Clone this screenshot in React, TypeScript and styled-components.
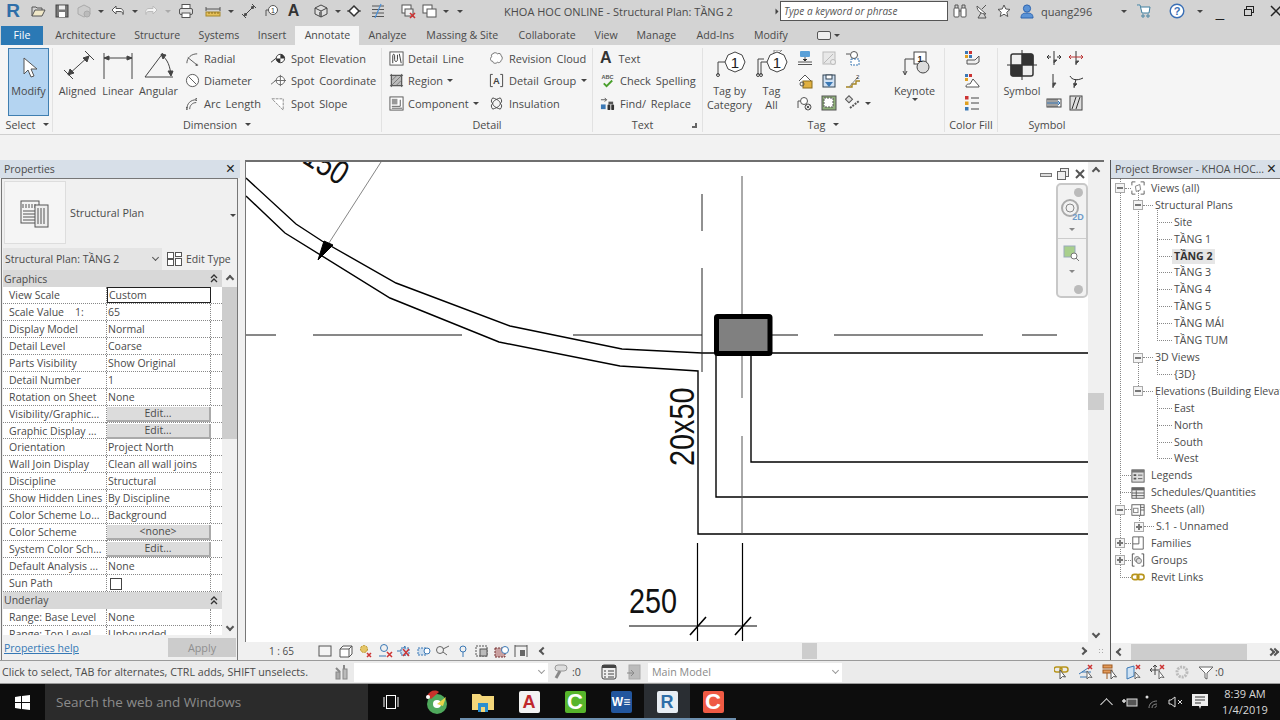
import React from 'react';
import styled, { createGlobalStyle } from 'styled-components';

const GlobalStyle = createGlobalStyle`
  html, body { margin: 0; padding: 0; background: #f0f0f0; }
  * { box-sizing: border-box; }
`;

const Screen = styled.div`
  width: 1280px;
  height: 720px;
  overflow: hidden;
  display: flex;
  flex-direction: column;
  font-family: 'Open Sans', 'Noto Sans', sans-serif;
  font-size: 10.8px;
  color: #4a4a4a;
  background: #f0f0f0;
`;

const IconSvg = styled.svg`
  display: block;
  flex: none;
`;

const Caret = styled.span<{ $c?: string; $mt?: number }>`
  display: inline-block;
  flex: none;
  width: 0;
  height: 0;
  margin-top: ${(p) => p.$mt || 0}px;
  border-left: 3px solid transparent;
  border-right: 3px solid transparent;
  border-top: 3px solid ${(p) => p.$c || '#444'};
`;

const SideCaret = styled(Caret)`
  transform: rotate(-90deg);
`;

const icons: Record<string, React.ReactNode> = {
  open: <><path d="M2 13V4h4l1 1h5v2" stroke="#555" /><path d="M2 13l3-6h10l-3 6z" fill="#f0e8c8" stroke="#555" /></>,
  save: <><rect x="2" y="2" width="12" height="12" fill="#777" stroke="#444" /><rect x="5" y="2.5" width="6" height="4" fill="#eee" stroke="none" /><rect x="5" y="9" width="6" height="5" fill="#fff" stroke="none" /></>,
  model: <><path d="M8 2l6 3v6l-6 3-6-3V5z" fill="#ccc" stroke="#aaa" /><circle cx="11" cy="11" r="3" fill="#bbb" stroke="#aaa" /></>,
  undo: <path d="M6 3L2 7l4 4V8.500h4c2 0 3 1 3 3 1-3 0-6-3-6H6z" fill="#fff" stroke="#555" />,
  redo: <path d="M10 3l4 4-4 4V8.500H6c-2 0-3 1-3 3-1-3 0-6 3-6h4z" fill="#f4f4f4" stroke="#bbb" />,
  print: <><rect x="4" y="1.5" width="8" height="4" fill="#fff" stroke="#555" /><rect x="1.5" y="5.5" width="13" height="6" rx="1.5" fill="#ddd" stroke="#555" /><rect x="4" y="10" width="8" height="4.5" fill="#fff" stroke="#555" /></>,
  measure: <><path d="M1 6h14M1 4v4M15 4v4" stroke="#555" /><rect x="1" y="9" width="14" height="4" fill="#e6c15a" stroke="#a5872d" /><path d="M4 9v2M7 9v2M10 9v2M13 9v2" stroke="#8a6d1d" /></>,
  dim: <><path d="M3 13L13 3" stroke="#444" /><path d="M1 11l4 4M11 1l4 4" stroke="#444" /><path d="M3 13l1-3 2 2zM13 3l-3 1 2 2z" fill="#444" /></>,
  tagMini: <><circle cx="10" cy="7" r="4.5" fill="#fff" stroke="#555" /><path d="M5.500 7H3v6" stroke="#555" /><text x="10" y="9.500" fontSize="7" fill="#333" stroke="none" textAnchor="middle" fontFamily="Liberation Sans">1</text></>,
  cube: <><path d="M8 2l6 3v6l-6 3-6-3V5z" fill="#ddd" stroke="#444" /><path d="M2 5l6 3 6-3M8 8v6" stroke="#444" /><rect x="6" y="9" width="3" height="4" fill="#777" stroke="none" /></>,
  section: <><path d="M8 3l5 5-5 5-5-5z" fill="#fff" stroke="#333" strokeWidth="1.5" /><path d="M1 8h3M12 8h3" stroke="#333" /></>,
  thin: <><path d="M2 3h12M2 6.500h12M2 10h12M2 13.500h12" stroke="#555" /><path d="M11 1L5 15" stroke="#4a90d9" strokeWidth="1.2" /></>,
  hidden: <><rect x="2" y="2" width="9" height="8" fill="#fff" stroke="#555" /><rect x="5" y="6" width="8" height="7" fill="#eee" stroke="#555" /><path d="M10 10l5 5M15 10l-5 5" stroke="#c33" strokeWidth="1.6" /></>,
  switchw: <><rect x="2" y="2" width="9" height="8" fill="#fff" stroke="#555" /><rect x="6" y="6" width="9" height="8" fill="#fff" stroke="#555" /></>,
  binoc: <><rect x="2" y="5" width="5" height="9" rx="1" fill="#fff" stroke="#555" /><rect x="9" y="5" width="5" height="9" rx="1" fill="#fff" stroke="#555" /><path d="M3 5V2h3v3M10 5V2h3v3M7 8h2" stroke="#555" /></>,
  dish: <><path d="M3 3c0 5 4 8 9 8z" fill="#fff" stroke="#555" /><path d="M7 10l-3 5h8l-2-4M8 6l4-4" stroke="#555" /></>,
  star: <path d="M8 2l1.800 4 4.200.4-3.200 2.800 1 4.300L8 11.200l-3.800 2.300 1-4.300L2 6.400 6.200 6z" fill="#fff" stroke="#555" />,
  user: <><circle cx="8" cy="5.500" r="3.600" fill="#5b93d6" stroke="#2c64b0" /><path d="M2 15c0-4 2-5 6-5s6 1 6 5z" fill="#5b93d6" stroke="#2c64b0" /></>,
  cart: <><path d="M1 2h3l2 8h7l1-6H5" stroke="#3f7f9f" fill="#fff" /><circle cx="7" cy="13" r="1.200" stroke="#3f7f9f" /><circle cx="12" cy="13" r="1.200" stroke="#3f7f9f" /></>,
  help: <><circle cx="8" cy="8" r="6.800" fill="#fff" stroke="#3a6fb5" strokeWidth="1.4" /><text x="8" y="12" fontSize="11" fontWeight="700" fill="#3a6fb5" stroke="none" textAnchor="middle" fontFamily="Liberation Sans">?</text></>,
  radial: <><path d="M2 13C2 7 7 3 13 3" stroke="#555" /><path d="M3 7l10 8M11 15h3M12.500 13.500v3" stroke="#555" /></>,
  diameter: <><circle cx="8" cy="8" r="6.500" fill="#fff" stroke="#555" /><path d="M4 4l8 8" stroke="#555" /></>,
  arc: <><path d="M2 14C2 8 6 4 12 4" stroke="#555" /><path d="M5 14c0-4 3-7 7-7" stroke="#555" /><path d="M2 12v3M12 2v3" stroke="#333" strokeWidth="1.5" strokeDasharray="1 1" /></>,
  spotEl: <><path d="M0 12l5-4h3" stroke="#333" /><circle cx="10" cy="8" r="4.500" fill="#fff" stroke="#333" /><path d="M10 8V3.500a4.500 4.500 0 0 1 4.500 4.500zM10 8v4.500A4.500 4.500 0 0 1 5.500 8z" fill="#333" stroke="none" /></>,
  spotCo: <><path d="M0 12l5-4h3" stroke="#666" /><circle cx="10" cy="8" r="4.500" fill="#fff" stroke="#666" /><path d="M10 2v12M4 8h12" stroke="#666" /></>,
  spotSl: <path d="M1 3h12v12z" fill="#fff" stroke="#888" strokeDasharray="3 1" />,
  detail: <><rect x="1" y="1" width="14" height="14" fill="#fff" stroke="#555" /><path d="M4 13V5c0-2 2-2 2 0v4c0 3 3 3 3 0V4M11 3l2 10" stroke="#333" /></>,
  region: <><rect x="2.500" y="2.500" width="11" height="11" fill="#bbb" stroke="#555" /><path d="M1 2.500h14M1 13.500h14M2.500 1v14M13.500 1v14" stroke="#555" /><path d="M3 8l5-5M3 13l10-10M8 13l5-5" stroke="#777" /></>,
  component: <><rect x="1" y="1" width="14" height="14" fill="#fff" stroke="#555" /><rect x="3" y="3" width="6" height="6" fill="#999" stroke="none" /><path d="M3 11h9V4M3 13h11" stroke="#555" /></>,
  cloud: <path d="M4 3c2-2 4-1 5 0 2-1 4 0 4 2 2 2 1 4 0 5 0 2-3 3-4 2-2 2-5 1-5-1-3 0-3-4-1-5-1-1 0-3 1-3z" fill="#fff" stroke="#666" />,
  group: <><path d="M4 1.500H1.500v13H4M12 1.500h2.500v13H12" stroke="#444" /><text x="8" y="12" fontSize="10" fontWeight="700" fill="#444" stroke="none" textAnchor="middle" fontFamily="Liberation Sans">A</text></>,
  insul: <path d="M4 2c6 2 8 4 8 6s-2 4-8 6M12 2C6 4 4 6 4 8s2 4 8 6M4 2c-2 2-2 5 0 6-2 1-2 4 0 6M12 2c2 2 2 5 0 6 2 1 2 4 0 6" stroke="#444" />,
  check: <><text x="8" y="6" fontSize="6" fontWeight="700" fill="#555" stroke="none" textAnchor="middle" fontFamily="Liberation Sans">ABC</text><path d="M4 11l3 3 6-6" stroke="#4aa02c" strokeWidth="2" /></>,
  find: <><path d="M1 4h6M5 2l2 2-2 2" stroke="#555" /><rect x="1" y="9" width="5" height="5" fill="#3a78b5" stroke="none" /><rect x="8" y="9" width="3" height="6" rx="1" fill="#333" stroke="none" /><rect x="12" y="9" width="3" height="6" rx="1" fill="#333" stroke="none" /><rect x="9" y="6" width="5" height="3" fill="#555" stroke="none" /></>,
  tagOn: <><rect x="3" y="1" width="10" height="6" rx="1" fill="#5aa0d8" stroke="none" /><path d="M8 7v4M1 12h14M1 14.500h14" stroke="#555" /><path d="M6 9l2 2 2-2" fill="#333" stroke="#333" /></>,
  tagOff: <><rect x="2" y="2" width="12" height="12" fill="#e8e8e8" stroke="#bbb" /><path d="M3 13l9-9" stroke="#bbb" /><circle cx="12" cy="12" r="2.500" fill="#eee" stroke="#bbb" /></>,
  tagBox: <><circle cx="9" cy="5" r="3.500" fill="#fff" stroke="#555" /><rect x="6" y="9" width="8" height="6" fill="#fff" stroke="#3a78b5" strokeDasharray="2 1" /><path d="M1 4h4" stroke="#555" /></>,
  tagFold: <><path d="M2 8l6-6 6 6" fill="#fff" stroke="#555" /><rect x="6" y="8" width="9" height="7" fill="#e0b040" stroke="#8a6d1d" /><circle cx="5" cy="11" r="2" stroke="#555" /></>,
  tagSave: <><rect x="2" y="2" width="12" height="12" fill="#cfe0f2" stroke="#345" /><rect x="5" y="2" width="6" height="4" fill="#fff" stroke="#345" /><path d="M4 9h8l-4 5z" fill="#3a78b5" stroke="none" /></>,
  tagStep: <><path d="M1 14h6v-3h4V8h4" stroke="#a58420" strokeWidth="1.4" /><path d="M4 14l9-10" stroke="#888" /><text x="11" y="6" fontSize="6" fill="#333" stroke="none" fontFamily="Liberation Sans">2</text></>,
  tagX: <><circle cx="7" cy="6" r="3.500" fill="#fff" stroke="#555" /><path d="M3 6H1v7" stroke="#555" /><circle cx="11" cy="12" r="3" fill="#eee" stroke="#555" /><path d="M9.500 10.500l3 3M12.500 10.500l-3 3" stroke="#555" /></>,
  tagGrid: <><rect x="1" y="1" width="14" height="14" fill="#8fb07a" stroke="#555" /><rect x="3" y="3" width="9" height="9" fill="#fff" stroke="#555" strokeDasharray="2 1" /></>,
  tagDiag: <><rect x="1" y="2" width="5" height="5" transform="rotate(45 4 5)" fill="#ddd" stroke="#555" /><path d="M5 13l9-7" stroke="#555" strokeWidth="2" strokeDasharray="2 1" /></>,
  fillA: <><rect x="1" y="1" width="3" height="3" fill="#3a78b5" stroke="none" /><rect x="5" y="1" width="3" height="3" fill="#c33" stroke="none" /><rect x="1" y="5" width="3" height="3" fill="#e0a020" stroke="none" /><rect x="5" y="5" width="3" height="3" fill="#3a78b5" stroke="none" /><path d="M3 10h8l4-4v6l-3 2H3z" fill="#eee" stroke="#555" /></>,
  fillB: <><rect x="1" y="1" width="3" height="3" fill="#3a78b5" stroke="none" /><rect x="5" y="1" width="3" height="3" fill="#c33" stroke="none" /><rect x="1" y="5" width="3" height="3" fill="#e0a020" stroke="none" /><path d="M2 14c0-3 2-3 4-3l3-5 6 7v1z" fill="#fff" stroke="#555" /></>,
  fillC: <><rect x="1" y="1" width="3.500" height="3.500" fill="#c33" stroke="none" /><rect x="1" y="6.500" width="3.500" height="3.500" fill="#e0a020" stroke="none" /><rect x="1" y="12" width="3.500" height="3.500" fill="#3a78b5" stroke="none" /><path d="M7 3h8M7 8h8M7 14h8" stroke="#444" /></>,
  symA: <><path d="M8 1v14" stroke="#333" /><path d="M8 10l3 0-3 3z" fill="#333" /><path d="M1 7h4M11 7h4M3 5L1 7l2 2M13 5l2 2-2 2" stroke="#333" /></>,
  symB: <><path d="M8 1v14" stroke="#333" /><path d="M8 11l3 0-3 3z" fill="#333" /><path d="M1 7h14M3 5L1 7l2 2M13 5l2 2-2 2" stroke="#b33" /></>,
  symC: <><path d="M7 1v14" stroke="#333" /><path d="M7 10l3 0-3 4z" fill="#333" /></>,
  symD: <><path d="M2 3c2 4 7 5 13 2M8 6l-2 9M5 11h4" stroke="#333" /><path d="M6 10l3 1-3 3z" fill="#333" /></>,
  symE: <><rect x="1" y="4" width="14" height="8" fill="#fff" stroke="#444" /><path d="M3 4v8M5 4v8M7 4v8M9 4v8M11 4v8" stroke="#444" /><path d="M1 8h13l-2-2M14 8l-2 2" stroke="#3a78b5" /></>,
  symF: <><rect x="2" y="1" width="12" height="14" fill="#ddd" stroke="#444" /><path d="M4 14L8 2M8 14l4-12" stroke="#333" /></>,
  views: <><path d="M1 5V1h4M11 1h4v4M15 11v4h-4M5 15H1v-4" stroke="#555" /><path d="M5 6l5-2 1 6-5 2z" fill="#fff" stroke="#777" /></>,
  legends: <><rect x="1" y="1" width="14" height="14" fill="#ddd" stroke="#555" /><rect x="1" y="1" width="14" height="3" fill="#777" stroke="none" /><rect x="3" y="6" width="3" height="2" fill="#555" stroke="none" /><rect x="3" y="10" width="3" height="2" fill="#555" stroke="none" /><path d="M8 7h5M8 11h5" stroke="#555" /></>,
  sched: <><rect x="1" y="2" width="14" height="12" fill="#eee" stroke="#555" /><rect x="1" y="2" width="14" height="3" fill="#666" stroke="none" /><path d="M1 8h14M1 11h14M6 5v9" stroke="#555" /></>,
  sheets: <><rect x="1" y="2" width="14" height="12" fill="#fff" stroke="#555" /><rect x="3" y="6" width="5" height="5" stroke="#777" /><path d="M11 2v12M11 5h4M11 8h4" stroke="#555" /></>,
  families: <><path d="M2 1h12v14H2z" fill="#fff" stroke="#555" /><path d="M9 1v8H2" stroke="#555" /></>,
  groups: <><path d="M4 1H1.500v14H4M12 1h2.500v14H12" stroke="#444" /><circle cx="7" cy="7" r="3" stroke="#777" fill="#ddd" /><circle cx="9" cy="9" r="3" stroke="#777" fill="#ddd" /></>,
  links: <><rect x="1" y="5" width="8" height="6" rx="3" stroke="#b8951c" strokeWidth="1.8" /><rect x="7" y="5" width="8" height="6" rx="3" stroke="#b8951c" strokeWidth="1.8" /></>,
  sun: <><circle cx="7" cy="6" r="3.500" fill="#e5c668" stroke="#b5922a" strokeDasharray="2 1" /><path d="M10 10l4 4M14 10l-4 4" stroke="#c33" strokeWidth="1.5" /></>,
  crop: <><rect x="1" y="3" width="12" height="10" fill="#f4f4f4" stroke="#555" /></>,
  box: <><path d="M2 6l3-3h9v8l-3 3H2zM2 6h9v8M11 6l3-3" fill="#fff" stroke="#555" /></>,
  hideEl: <><circle cx="7" cy="5" r="3.500" stroke="#3a78b5" /><path d="M2 13h7" stroke="#3a78b5" /><path d="M10 9l5 5M15 9l-5 5" stroke="#c33" strokeWidth="1.5" /></>,
  lamp: <><path d="M1 8h4l4-5v10" stroke="#3a78b5" /><rect x="5" y="5" width="8" height="7" fill="#cde" stroke="#3a78b5" strokeDasharray="2 1" /><path d="M7 6l6 7M13 6l-6 7" stroke="#c33" strokeWidth="1.4" /></>,
  lamp2: <><rect x="2" y="5" width="8" height="7" fill="#cde" stroke="#3a78b5" strokeDasharray="2 1" /><circle cx="11" cy="8" r="3" stroke="#3a78b5" fill="#fff" /></>,
  glasses: <><circle cx="5" cy="7" r="3.500" stroke="#666" /><path d="M8 6l6-3M8 9l4 3" stroke="#666" /></>,
  pin: <><circle cx="8" cy="6" r="3" stroke="#3a78b5" /><path d="M8 9v5" stroke="#3a78b5" /></>,
  temp: <><rect x="2" y="3" width="11" height="10" stroke="#555" strokeDasharray="2 1" /><rect x="6" y="6" width="7" height="7" fill="#bbb" stroke="#555" /></>,
  reveal: <><rect x="1" y="5" width="10" height="9" fill="#c9a0a0" stroke="#733" strokeDasharray="2 1" /><circle cx="11" cy="7" r="3.500" fill="#fff" stroke="#3a78b5" /></>,
  crop2: <><path d="M2 2v12M14 2v12M2 3h12" stroke="#555" /><rect x="7" y="7" width="5" height="6" fill="#666" stroke="none" /></>,
  wrench: <><rect x="2" y="8" width="4" height="7" fill="#aaa" stroke="#888" /><rect x="9" y="5" width="4" height="10" fill="#bbb" stroke="#888" /><path d="M2 4l4 4M10 1v4" stroke="#888" strokeWidth="2" /></>,
  pipe: <><rect x="3" y="1" width="12" height="6" rx="3" fill="#ddd" stroke="#999" /><path d="M8 7l-4 7" stroke="#888" strokeWidth="3" /></>,
  calc: <><rect x="1" y="1" width="14" height="14" rx="2" fill="#eee" stroke="#444" /><rect x="1" y="1" width="14" height="3" fill="#444" stroke="none" /><path d="M3 7h2M7 7h6M3 10h2M7 10h6M3 13h2M7 13h6" stroke="#444" /></>,
  exit: <><rect x="3" y="1" width="11" height="14" fill="#bbb" stroke="#aaa" /><path d="M1 9h7M5 6l3 3-3 3" stroke="#888" /></>,
  selLink: <><rect x="0" y="3" width="8" height="5" rx="2.500" stroke="#b8951c" strokeWidth="1.5" /><rect x="6" y="3" width="8" height="5" rx="2.500" stroke="#b8951c" strokeWidth="1.5" /><path d="M6 6v9l2.500-2.500 3 .5z" fill="#fff" stroke="#555" /></>,
  selUnd: <><path d="M1 10l9-6M2 13h9M4 8h9" stroke="#3a78b5" /><path d="M10 1l4 4M14 1l-4 4" stroke="#c33" strokeWidth="1.5" /><path d="M9 7v8l2-2 3 .5z" fill="#fff" stroke="#666" /></>,
  selPin: <><rect x="1" y="1" width="9" height="3" fill="#e29a5a" stroke="#a05a20" /><rect x="1" y="6" width="9" height="3" fill="#e29a5a" stroke="#a05a20" /><path d="M5 9v6" stroke="#a05a20" /><path d="M9 6v9l2.500-2.500 3 .5z" fill="#fff" stroke="#555" /></>,
  selFace: <><path d="M1 4l7-2v10l-7 3z" fill="#cfe3f5" stroke="#3a78b5" /><path d="M10 1l4 4M14 1l-4 4" stroke="#c33" strokeWidth="1.5" /><path d="M9 8v7l2-2 3 .5z" fill="#fff" stroke="#666" /></>,
  selDrag: <><path d="M5 1v10M0 6h10M5 1L3 3M5 1l2 2M0 6l2-2M0 6l2 2" stroke="#444" /><path d="M10 1l4 4M14 1l-4 4" stroke="#c33" strokeWidth="1.5" /><path d="M9 7v8l2-2 3 .5z" fill="#fff" stroke="#666" /></>,
  gear: <circle cx="8" cy="8" r="5" stroke="#bbb" strokeWidth="3" strokeDasharray="2 1" />,
  funnel: <path d="M1 3h14L9 9v6l-2-1V9z" fill="#fff" stroke="#666" />,
};

const Icon = ({ n, s = 16 }: { n: string; s?: number }): JSX.Element => (
  <IconSvg width={s} height={s} viewBox="0 0 16 16" fill="none" stroke="#555" strokeWidth="1">
    {icons[n]}
  </IconSvg>
);

/* title bar */
const TitleBar = styled.div`
  height: 22px;
  flex: none;
  display: flex;
  align-items: center;
  background: #d3d3d3;
  font-size: 11px;
`;

const Slot = styled.div<{ $w: number; $ml?: number }>`
  width: ${(p) => p.$w}px;
  margin-left: ${(p) => p.$ml || 0}px;
  flex: none;
  display: flex;
  align-items: center;
  justify-content: center;
`;

const Logo = styled.span`
  font-family: 'Liberation Sans', sans-serif;
  font-weight: 700;
  font-size: 19px;
  color: #2f6ea8;
`;

const BigA = styled.span`
  font-family: 'Liberation Sans', sans-serif;
  font-weight: 700;
  font-size: 16px;
  color: #333;
`;

const QuickSep = styled.div`
  width: 1px;
  height: 18px;
  margin: 0 3px;
  background: #bdbdbd;
`;

const TitleText = styled.div`
  width: 269px;
  margin-left: 37px;
  flex: none;
  white-space: nowrap;
`;

const SearchBox = styled.div`
  width: 168px;
  height: 20px;
  flex: none;
  padding-left: 3px;
  background: #fff;
  border: 1px solid #555;
  font-style: italic;
  font-size: 10px;
  line-height: 18px;
  color: #555;
  white-space: nowrap;
`;

const UserName = styled.div`
  width: 80px;
  flex: none;
  margin-left: 3px;
`;

const WindowGlyph = styled.span`
  font-family: 'Liberation Sans', sans-serif;
  color: #222;
  font-size: 15px;
`;

/* tabs */
const TabBar = styled.div`
  height: 23px;
  flex: none;
  display: flex;
  align-items: stretch;
  padding: 4px 0 0 1px;
  background: #d3d3d3;
  font-size: 10.6px;
`;

const Tab = styled.div<{ $active?: boolean; $px?: number }>`
  padding: 0 ${(p) => p.$px || 9.2}px 1px;
  display: flex;
  align-items: center;
  white-space: nowrap;
  background: ${(p) => (p.$active ? '#f5f5f5' : 'transparent')};
`;

const FileTab = styled.div`
  width: 42px;
  margin-right: 3px;
  padding-bottom: 1px;
  display: flex;
  align-items: center;
  justify-content: center;
  background: #2b79b5;
  color: #fff;
`;

const PanelToggle = styled.div`
  display: flex;
  align-items: center;
  gap: 3px;
  margin-left: 20px;
`;

const ToggleBox = styled.div`
  width: 14px;
  height: 9px;
  border: 1px solid #555;
  border-radius: 2px;
  background: #eee;
`;

/* ribbon */
const Ribbon = styled.div`
  height: 90px;
  flex: none;
  display: flex;
  padding-left: 3px;
  background: #f5f5f5;
  border-bottom: 1px solid #cfcfcf;
`;

const RibbonGroup = styled.div<{ $w: number; $last?: boolean }>`
  width: ${(p) => p.$w}px;
  flex: none;
  margin-top: 3px;
  margin-bottom: 2px;
  display: flex;
  flex-direction: column;
  border-right: ${(p) => (p.$last ? 'none' : '1px solid #e2e2e2')};
`;

const GroupBody = styled.div<{ $pl?: number }>`
  height: 68px;
  display: flex;
  padding-left: ${(p) => p.$pl || 0}px;
`;

const GroupLabel = styled.div<{ $pr?: number }>`
  flex: 1;
  display: flex;
  align-items: center;
  justify-content: center;
  gap: 8px;
  padding-right: ${(p) => p.$pr || 0}px;
  position: relative;
  white-space: nowrap;
`;

const ModifyButton = styled.div`
  width: 41px;
  height: 68px;
  margin-left: 5px;
  display: flex;
  flex-direction: column;
  align-items: center;
  padding-top: 6px;
  background: #b4d4f1;
  border: 1px solid #3f7eb0;
`;

const ModifyLabel = styled.div`
  margin-top: auto;
  margin-bottom: 17px;
  text-align: center;
  white-space: nowrap;
`;

const BigTool = styled.div<{ $w: number }>`
  width: ${(p) => p.$w}px;
  flex: none;
  display: flex;
  flex-direction: column;
  align-items: center;
  padding-top: 2px;
  white-space: nowrap;
`;

const BigLabel = styled.div<{ $mt?: number }>`
  height: 14px;
  margin-top: ${(p) => (p.$mt === undefined ? 4 : p.$mt)}px;
  line-height: 14px;
  text-align: center;
`;

const SmallColumn = styled.div<{ $w: number; $ml?: number }>`
  width: ${(p) => p.$w}px;
  margin-left: ${(p) => p.$ml || 0}px;
  margin-top: -1px;
  flex: none;
  display: flex;
  flex-direction: column;
`;

const SmallTool = styled.div<{ $gap?: number }>`
  height: 22.5px;
  display: flex;
  align-items: center;
  gap: ${(p) => p.$gap || 4}px;
  white-space: nowrap;
  word-spacing: 2px;
  font-size: 11px;
`;

const IconGrid = styled.div<{ $cols: number; $w: number; $ml?: number }>`
  width: ${(p) => p.$w}px;
  margin-left: ${(p) => p.$ml || 0}px;
  margin-top: -1px;
  height: 68px;
  flex: none;
  display: grid;
  grid-template-columns: repeat(${(p) => p.$cols}, 1fr);
  grid-auto-rows: 22.5px;
  align-items: center;
  justify-items: center;
`;

const SoftSep = styled.div`
  width: 1px;
  height: 62px;
  margin: 2px 3px 0 6px;
  background: #e2e2e2;
`;

const Launcher = styled.span`
  position: absolute;
  right: 5px;
  top: 7px;
  width: 5px;
  height: 5px;
  border-right: 2px solid #666;
  border-bottom: 2px solid #666;
`;

const RibbonGap = styled.div`
  height: 25px;
  flex: none;
  background: #f2f2f2;
`;

/* workspace */
const Workspace = styled.div`
  height: 500px;
  flex: none;
  display: flex;
`;

const PropertiesPanel = styled.div`
  width: 240px;
  flex: none;
  display: flex;
  flex-direction: column;
`;

const PanelHeader = styled.div`
  height: 18px;
  flex: none;
  display: flex;
  align-items: center;
  justify-content: space-between;
  padding: 0 4px;
  background: #d7dfe8;
  font-size: 10.5px;
  white-space: nowrap;
`;

const PropertiesHeader = styled(PanelHeader)`
  padding-right: 5px;
`;

const CloseX = styled.span`
  font-family: 'Liberation Sans', sans-serif;
  font-size: 16px;
  line-height: 16px;
  color: #222;
`;

const PropertiesBody = styled.div`
  flex: 1;
  min-height: 0;
  display: flex;
  flex-direction: column;
  margin-left: 1px;
  margin-right: 2px;
  border: 1px solid #777;
  border-bottom: none;
  background: #f0f0f0;
`;

const TypeSelector = styled.div`
  height: 68px;
  flex: none;
  display: flex;
  align-items: center;
  padding: 2px 0 3px 2px;
`;

const TypeThumb = styled.div`
  width: 62px;
  height: 63px;
  flex: none;
  display: flex;
  align-items: center;
  justify-content: center;
  background: #f5f5f5;
  border: 1px solid #ddd;
`;

const TypeName = styled.div`
  flex: 1;
  margin-left: 4px;
`;

const TypeCaret = styled.div`
  margin-right: 1px;
`;

const InstanceRow = styled.div`
  height: 23px;
  flex: none;
  display: flex;
  align-items: center;
`;

const InstanceCombo = styled.div`
  width: 159px;
  height: 22px;
  margin-left: 1px;
  display: flex;
  align-items: center;
  justify-content: space-between;
  padding: 0 4px 0 2px;
  background: #e4e4e4;
  white-space: nowrap;
  font-size: 10.5px;
`;

const EditType = styled.div`
  display: flex;
  align-items: center;
  gap: 4px;
  margin-left: 5px;
  white-space: nowrap;
  font-size: 10.5px;
`;

const PropertyArea = styled.div`
  height: 365px;
  flex: none;
  display: flex;
  overflow: hidden;
`;

const PropertyGrid = styled.div`
  width: 219px;
  margin-left: 1px;
  flex: none;
  background: #fff;
  font-size: 10.5px;
`;

const GridHeader = styled.div`
  height: 17px;
  display: flex;
  align-items: center;
  justify-content: space-between;
  padding: 0 4px 0 1px;
  background: #d8d8d8;
`;

const PropRow = styled.div`
  height: 16.95px;
  display: grid;
  grid-template-columns: 104px 104px 1fr;
  border-bottom: 1px dotted #888;
`;

const PropName = styled.div`
  padding-left: 6px;
  line-height: 16px;
  white-space: pre;
  overflow: hidden;
  border-right: 1px dotted #888;
`;

const PropValue = styled.div<{ $focus?: boolean }>`
  padding-left: 1px;
  line-height: ${(p) => (p.$focus ? '14px' : '16px')};
  white-space: nowrap;
  overflow: hidden;
  border-right: 1px dotted #888;
  ${(p) => p.$focus && 'border: 1px solid #222; background: #fff;'}
`;

const PropButton = styled.div`
  margin: 1px 0;
  border-right: 2px solid #aaa;
  border-bottom: 2px solid #aaa;
  background: #dcdcdc;
  text-align: center;
  line-height: 13px;
`;

const CheckBox = styled.div`
  width: 12px;
  height: 12px;
  margin: 3px 0 0 2px;
  border: 1px solid #444;
  background: #fff;
`;

const VScroll = styled.div<{ $w: number }>`
  width: ${(p) => p.$w}px;
  flex: none;
  display: flex;
  flex-direction: column;
  align-items: center;
  background: #f0f0f0;
`;

const Thumb = styled.div<{ $top: number; $h: number }>`
  width: 100%;
  height: ${(p) => p.$h}px;
  margin-top: ${(p) => p.$top}px;
  background: #cdcdcd;
`;

const Chevron = styled.span<{ $dir: 'up' | 'down' | 'left' | 'right' }>`
  display: block;
  flex: none;
  width: 6px;
  height: 6px;
  border-top: 2px solid #555;
  border-left: 2px solid #555;
  transform: rotate(
    ${(p) => ({ up: 45, right: 135, down: 225, left: -45 }[p.$dir])}deg
  );
`;

const ComboChevron = styled(Chevron)<{ $c?: string }>`
  width: 5px;
  height: 5px;
  margin-top: -3px;
  border-width: 1px;
  border-color: ${(p) => p.$c || '#555'};
`;

const TrayChevron = styled(Chevron)`
  width: 9px;
  height: 9px;
  margin-top: 4px;
  border-width: 1px;
  border-color: #ddd;
`;

const SecondChevron = styled(Chevron)`
  margin-left: -2px;
  margin-right: 2px;
`;

const ScrollEnd = styled.div<{ $bottom?: boolean }>`
  height: 17px;
  flex: none;
  margin-top: ${(p) => (p.$bottom ? 'auto' : 0)};
  display: flex;
  align-items: center;
  justify-content: center;
`;

const PanelFooter = styled.div`
  flex: 1;
  display: flex;
  align-items: center;
  justify-content: space-between;
  padding: 0 1px 0 2px;
`;

const HelpLink = styled.a`
  color: #3578b5;
  text-decoration: underline;
  font-size: 10.5px;
`;

const ApplyButton = styled.div`
  width: 68px;
  height: 19px;
  display: flex;
  align-items: center;
  justify-content: center;
  background: #cccccc;
  color: #8f8f8f;
`;

const ViewColumn = styled.div`
  width: 866px;
  margin-left: 5px;
  flex: none;
  display: flex;
  flex-direction: column;
  border-right: 1px solid #555;
`;

const ViewRow = styled.div`
  height: 482px;
  flex: none;
  display: flex;
`;

const Canvas = styled.div`
  position: relative;
  width: 843px;
  flex: none;
  background: #fff;
  border-top: 2px solid #6f6f6f;
  border-left: 1px solid #777;
  overflow: hidden;
`;

const ViewScrollTrack = styled(VScroll)`
  border-top: 2px solid #6f6f6f;
`;

const ViewControls = styled.div`
  position: absolute;
  top: 6px;
  right: 2px;
  display: flex;
  align-items: center;
  gap: 5px;
`;

const NavBar = styled.div`
  position: absolute;
  top: 21px;
  right: 0;
  width: 32px;
  height: 115px;
  display: flex;
  flex-direction: column;
  align-items: center;
  background: #f2f2f2;
  border: 2px solid #c8c8c8;
  border-radius: 5px;
`;

const NavDot = styled.div<{ $end?: boolean }>`
  align-self: flex-end;
  width: 9px;
  height: 9px;
  margin: ${(p) => (p.$end ? 'auto 3px 2px 0' : '3px 3px 0 0')};
  border-radius: 50%;
  background: #bbb;
`;

const NavRule = styled.div`
  width: 100%;
  height: 1px;
  margin: 7px 0 6px;
  background: #ccc;
`;

const ViewBar = styled.div`
  flex: 1;
  display: flex;
  align-items: center;
  background: #f0f0f0;
  font-size: 10px;
`;

const ScaleText = styled.div`
  width: 73px;
  padding-left: 24px;
  flex: none;
  white-space: nowrap;
`;

const ViewBarIcons = styled.div`
  display: flex;
  align-items: center;
  gap: 3.5px;
  width: 222px;
  flex: none;
`;

const HThumb = styled.div<{ $ml: number; $w: number }>`
  width: ${(p) => p.$w}px;
  height: 16px;
  margin-left: ${(p) => p.$ml}px;
  flex: none;
  background: #cdcdcd;
`;

const Spacer = styled.div`
  flex: 1;
`;

const Grip = styled.div`
  width: 7px;
  height: 7px;
  margin: 0 5px 0 12px;
  background: radial-gradient(#aaa 40%, transparent 45%) 0 0 / 3px 3px;
`;

/* project browser */
const BrowserPanel = styled.div`
  flex: 1;
  min-width: 0;
  display: flex;
  flex-direction: column;
  background: #fff;
`;

const Tree = styled.div`
  height: 465px;
  flex: none;
  padding: 1px 0 0 9px;
  background: #fff;
  font-size: 10.6px;
  overflow: hidden;
  border-top: 1px solid #777;
`;

const Branch = styled.div<{ $ml: number }>`
  position: relative;
  margin-left: ${(p) => p.$ml}px;

  &::before {
    content: '';
    position: absolute;
    left: 0;
    top: -6px;
    bottom: 8px;
    border-left: 1px dotted #888;
  }
`;

const TreeRow = styled.div`
  position: relative;
  z-index: 1;
  height: 16.92px;
  display: flex;
  align-items: center;
  white-space: nowrap;
`;

const Expander = styled.div<{ $open?: boolean }>`
  position: relative;
  width: 10px;
  height: 10px;
  margin-left: -5px;
  flex: none;
  background: #f4f4f4;
  border: 1px solid #aaa;

  &::before {
    content: '';
    position: absolute;
    left: 1px;
    right: 1px;
    top: 3px;
    height: 2px;
    background: #777;
  }

  &::after {
    content: '';
    display: ${(p) => (p.$open ? 'none' : 'block')};
    position: absolute;
    top: 1px;
    bottom: 1px;
    left: 3px;
    width: 2px;
    background: #777;
  }
`;

const Dash = styled.div<{ $w: number }>`
  width: ${(p) => p.$w}px;
  flex: none;
  border-top: 1px dotted #888;
`;

const NodeLabel = styled.div<{ $ml?: number; $active?: boolean }>`
  margin-left: ${(p) => p.$ml || 0}px;
  padding: 0 2px;
  line-height: 15px;
  ${(p) => p.$active && 'background: #e6e6e6; font-weight: 700; color: #333;'}
`;

const BrowserBar = styled.div`
  flex: 1;
  display: flex;
  align-items: center;
  background: #f0f0f0;
  padding-left: 6px;
`;

/* status bar */
const StatusBar = styled.div`
  height: 24px;
  flex: none;
  display: flex;
  align-items: center;
  background: #ebebeb;
  border-top: 1px solid #9a9a9a;
  border-bottom: 1px solid #9a9a9a;
  font-size: 10.7px;
`;

const StatusText = styled.div`
  width: 330px;
  padding-left: 2px;
  flex: none;
  white-space: nowrap;
`;

const StatusCombo = styled.div<{ $w: number; $ml?: number }>`
  width: ${(p) => p.$w}px;
  height: 19px;
  margin-left: ${(p) => p.$ml || 0}px;
  flex: none;
  display: flex;
  align-items: center;
  justify-content: space-between;
  padding: 0 4px;
  background: #fff;
  color: #8a8a8a;
`;

const StatusCount = styled.div<{ $w: number; $ml?: number }>`
  width: ${(p) => p.$w}px;
  margin-left: ${(p) => p.$ml || 0}px;
  flex: none;
  display: flex;
  align-items: center;
  white-space: nowrap;
`;

/* taskbar */
const Taskbar = styled.div`
  flex: 1;
  display: flex;
  align-items: center;
  background: #0d0d0d;
`;

const StartButton = styled.div`
  width: 45px;
  height: 100%;
  flex: none;
  display: flex;
  align-items: center;
  justify-content: center;
`;

const SearchWeb = styled.div`
  width: 323px;
  height: 100%;
  flex: none;
  display: flex;
  align-items: center;
  padding-left: 11px;
  background: #2b2b2b;
  color: #8c8c8c;
  font-size: 13.5px;
  white-space: nowrap;
`;

const TaskSlot = styled.div<{ $active?: boolean; $running?: boolean }>`
  width: 46px;
  height: 100%;
  flex: none;
  display: flex;
  align-items: center;
  justify-content: center;
  padding-top: 2px;
  background: ${(p) => (p.$active ? '#2a2e33' : 'transparent')};
  border-bottom: 2px solid ${(p) => (p.$running ? '#6d8fae' : 'transparent')};
`;

const AppTile = styled.div<{ $bg: string; $fg: string; $size?: number }>`
  width: 21px;
  height: 22px;
  display: flex;
  align-items: center;
  justify-content: center;
  border-radius: 2px;
  background: ${(p) => p.$bg};
  color: ${(p) => p.$fg};
  font-family: 'Liberation Sans', sans-serif;
  font-weight: 700;
  font-size: ${(p) => p.$size || 18}px;
`;

const Tray = styled.div`
  margin-left: auto;
  height: 100%;
  display: flex;
  align-items: center;
`;

const Clock = styled.div`
  width: 62px;
  margin: 0 4px 0 2px;
  text-align: center;
  font-size: 11px;
  line-height: 16px;
  color: #d8d8d8;
`;

const DrawingSvg = styled.svg`
  display: block;
`;

type Prop = { name: string; value?: string; kind?: 'focus' | 'button' | 'check' };

const graphics: Prop[] = [
  { name: 'View Scale', value: 'Custom', kind: 'focus' },
  { name: 'Scale Value    1:', value: '65' },
  { name: 'Display Model', value: 'Normal' },
  { name: 'Detail Level', value: 'Coarse' },
  { name: 'Parts Visibility', value: 'Show Original' },
  { name: 'Detail Number', value: '1' },
  { name: 'Rotation on Sheet', value: 'None' },
  { name: 'Visibility/Graphic...', value: 'Edit...', kind: 'button' },
  { name: 'Graphic Display ...', value: 'Edit...', kind: 'button' },
  { name: 'Orientation', value: 'Project North' },
  { name: 'Wall Join Display', value: 'Clean all wall joins' },
  { name: 'Discipline', value: 'Structural' },
  { name: 'Show Hidden Lines', value: 'By Discipline' },
  { name: 'Color Scheme Lo...', value: 'Background' },
  { name: 'Color Scheme', value: '<none>', kind: 'button' },
  { name: 'System Color Sch...', value: 'Edit...', kind: 'button' },
  { name: 'Default Analysis ...', value: 'None' },
  { name: 'Sun Path', kind: 'check' },
];

const underlay: Prop[] = [
  { name: 'Range: Base Level', value: 'None' },
  { name: 'Range: Top Level', value: 'Unbounded' },
];

const plans = ['Site', 'TẦNG 1', 'TẦNG 2', 'TẦNG 3', 'TẦNG 4', 'TẦNG 5', 'TẦNG MÁI', 'TẦNG TUM'];
const elevations = ['East', 'North', 'South', 'West'];

const PropertyRow = ({ name, value, kind }: Prop): JSX.Element => (
  <PropRow>
    <PropName>{name}</PropName>
    {kind === 'button' ? (
      <PropButton>{value}</PropButton>
    ) : (
      <PropValue $focus={kind === 'focus'}>{kind === 'check' ? <CheckBox /> : value}</PropValue>
    )}
  </PropRow>
);

const Small = ({ n, label, caret, gap }: { n: string; label: string; caret?: boolean; gap?: number }): JSX.Element => (
  <SmallTool $gap={gap}>
    <Icon n={n} s={15} />
    {label}
    {caret && <Caret />}
  </SmallTool>
);

const Collapse = (): JSX.Element => (
  <IconSvg width="8" height="9" viewBox="0 0 8 9" fill="none" stroke="#333" strokeWidth="1.3">
    <path d="M1 4l3-3 3 3M1 8l3-3 3 3" />
  </IconSvg>
);

const Drawing = (): JSX.Element => (
  <DrawingSvg width="842" height="480" viewBox="246 162 842 480" fill="none" stroke="#000">
    <path d="M246 178L296 224L322 241L396 283L510 326L622 349L702 353H1088" strokeWidth="1.4" />
    <path d="M246 196L285 233L390 298L499 342L620 366L698 371V534H1088" strokeWidth="1.4" />
    <path d="M716 355V497H1088M751 355V462H1088" strokeWidth="1.4" />
    <path d="M381 162L327 246" stroke="#666" strokeWidth="0.8" />
    <path d="M318 260L324 241L333 245z" fill="#000" stroke="#000" strokeWidth="1" />
    <path d="M742 176V316M742 355V398M742 436V534" stroke="#555" strokeWidth="1" />
    <path d="M702 194V231M702 268V372" stroke="#222" strokeWidth="1" />
    <path d="M246 335H276M313 335H462M573 335H702M721 335H735M750 335H764M772 335H798M834 335H983M1022 335H1057" stroke="#111" strokeWidth="1" />
    <rect x="716.5" y="316.5" width="53.5" height="37" rx="1" fill="#808080" strokeWidth="5" />
    <path d="M697.5 543V641M742.5 543V641M629 626H757" strokeWidth="1.2" />
    <path d="M690 635L706 617M735 635L751 617" strokeWidth="1.6" />
    <text transform="translate(629 613) scale(0.8 1)" fontFamily="Liberation Sans" fontSize="36" fill="#111" stroke="none">250</text>
    <text transform="translate(694 466) rotate(-90) scale(0.8 1)" fontFamily="Liberation Sans" fontSize="36" fill="#111" stroke="none">20x50</text>
    <text transform="translate(301 162) rotate(32) scale(0.8 1)" fontFamily="Liberation Sans" fontSize="34" fill="#111" stroke="none">150</text>
  </DrawingSvg>
);

const App = (): JSX.Element => (
  <Screen>
    <GlobalStyle />
    <TitleBar>
      <Slot $w={26}><Logo>R</Logo></Slot>
      <Slot $w={24}><Icon n="open" /></Slot>
      <Slot $w={23}><Icon n="save" /></Slot>
      <Slot $w={21}><Icon n="model" /></Slot>
      <Slot $w={14}><Caret /></Slot>
      <Slot $w={19}><Icon n="undo" /></Slot>
      <Slot $w={15}><Caret /></Slot>
      <Slot $w={18}><Icon n="redo" /></Slot>
      <Slot $w={15}><Caret $c="#aaa" /></Slot>
      <Slot $w={22}><Icon n="print" /></Slot>
      <QuickSep />
      <Slot $w={20}><Icon n="measure" /></Slot>
      <Slot $w={15}><Caret /></Slot>
      <Slot $w={21}><Icon n="dim" /></Slot>
      <Slot $w={24}><Icon n="tagMini" /></Slot>
      <Slot $w={21}><BigA>A</BigA></Slot>
      <QuickSep />
      <Slot $w={22}><Icon n="cube" /></Slot>
      <Slot $w={12}><Caret /></Slot>
      <Slot $w={20}><Icon n="section" /></Slot>
      <Slot $w={27}><Icon n="thin" /></Slot>
      <QuickSep />
      <Slot $w={21}><Icon n="hidden" /></Slot>
      <Slot $w={21}><Icon n="switchw" /></Slot>
      <Slot $w={14}><Caret /></Slot>
      <Slot $w={14}><Caret /></Slot>
      <TitleText>KHOA HOC ONLINE - Structural Plan: TẦNG 2</TitleText>
      <Slot $w={7}><SideCaret /></Slot>
      <SearchBox>Type a keyword or phrase</SearchBox>
      <Slot $w={23}><Icon n="binoc" /></Slot>
      <Slot $w={21}><Icon n="dish" /></Slot>
      <Slot $w={23}><Icon n="star" /></Slot>
      <Slot $w={23}><Icon n="user" /></Slot>
      <UserName>quang296</UserName>
      <Slot $w={6}><Caret /></Slot>
      <Slot $w={34}><Icon n="cart" /></Slot>
      <Slot $w={32}><Icon n="help" /></Slot>
      <Slot $w={14}><Caret /></Slot>
      <Slot $w={26}><WindowGlyph>_</WindowGlyph></Slot>
      <Slot $w={32}>
        <IconSvg width="12" height="12" viewBox="0 0 12 12" fill="none" stroke="#222">
          <rect x="3.5" y="1.5" width="7" height="6" /><rect x="1.5" y="4.5" width="7" height="6" fill="#d3d3d3" />
        </IconSvg>
      </Slot>
      <Slot $w={22}>
        <IconSvg width="12" height="12" viewBox="0 0 12 12" fill="none" stroke="#222" strokeWidth="1.5">
          <path d="M1 1l10 10M11 1L1 11" />
        </IconSvg>
      </Slot>
    </TitleBar>

    <TabBar>
      <FileTab>File</FileTab>
      <Tab>Architecture</Tab>
      <Tab>Structure</Tab>
      <Tab>Systems</Tab>
      <Tab>Insert</Tab>
      <Tab $active>Annotate</Tab>
      <Tab>Analyze</Tab>
      <Tab $px={10.7}>Massing &amp; Site</Tab>
      <Tab $px={9.7}>Collaborate</Tab>
      <Tab>View</Tab>
      <Tab $px={9.7}>Manage</Tab>
      <Tab $px={10.7}>Add-Ins</Tab>
      <Tab>Modify</Tab>
      <PanelToggle><ToggleBox /><Caret /></PanelToggle>
    </TabBar>

    <Ribbon>
      <RibbonGroup $w={50}>
        <GroupBody>
          <ModifyButton>
            <IconSvg width="20" height="24" viewBox="0 0 20 24" fill="#fff" stroke="#555">
              <path d="M5 3v16l4-4 3 7 3-1-3-7h6z" />
            </IconSvg>
            <ModifyLabel>Modify</ModifyLabel>
          </ModifyButton>
        </GroupBody>
        <GroupLabel>Select <Caret /></GroupLabel>
      </RibbonGroup>

      <RibbonGroup $w={329}>
        <GroupBody $pl={4}>
          <BigTool $w={41}>
            <IconSvg width="32" height="30" viewBox="0 0 32 30" fill="none" stroke="#444">
              <path d="M6 25L27 6M2 20l9 9M23 1l9 9" /><path d="M6 25l2-6 4 4zM27 6l-6 2 4 4z" fill="#444" />
            </IconSvg>
            <BigLabel>Aligned</BigLabel>
          </BigTool>
          <BigTool $w={40}>
            <IconSvg width="30" height="30" viewBox="0 0 30 30" fill="none" stroke="#444">
              <path d="M1 3v26M29 3v26M1 8h28" /><path d="M1 8l5-2v4zM29 8l-5-2v4z" fill="#444" />
            </IconSvg>
            <BigLabel>Linear</BigLabel>
          </BigTool>
          <BigTool $w={41}>
            <IconSvg width="30" height="30" viewBox="0 0 30 30" fill="none" stroke="#444">
              <path d="M1 27h28M1 27L19 3" /><path d="M17 5c7 4 9 12 10 20" /><path d="M27 26l-3-5 5 0z" fill="#444" /><path d="M17 4l5 1-3 4z" fill="#444" />
            </IconSvg>
            <BigLabel>Angular</BigLabel>
          </BigTool>
          <SmallColumn $w={86} $ml={6}>
            <Small n="radial" label="Radial" />
            <Small n="diameter" label="Diameter" />
            <Small n="arc" label="Arc Length" />
          </SmallColumn>
          <SmallColumn $w={106}>
            <Small n="spotEl" label="Spot Elevation" gap={5} />
            <Small n="spotCo" label="Spot Coordinate" gap={5} />
            <Small n="spotSl" label="Spot Slope" gap={5} />
          </SmallColumn>
        </GroupBody>
        <GroupLabel>Dimension <Caret /></GroupLabel>
      </RibbonGroup>

      <RibbonGroup $w={211}>
        <GroupBody $pl={7}>
          <SmallColumn $w={100}>
            <Small n="detail" label="Detail Line" />
            <Small n="region" label="Region" caret />
            <Small n="component" label="Component" caret />
          </SmallColumn>
          <SmallColumn $w={103}>
            <Small n="cloud" label="Revision Cloud" gap={5} />
            <Small n="group" label="Detail Group" gap={5} caret />
            <Small n="insul" label="Insulation" gap={5} />
          </SmallColumn>
        </GroupBody>
        <GroupLabel>Detail</GroupLabel>
      </RibbonGroup>

      <RibbonGroup $w={110}>
        <GroupBody $pl={7}>
          <SmallColumn $w={100}>
            <SmallTool $gap={7}><BigA>A</BigA>Text</SmallTool>
            <Small n="check" label="Check Spelling" gap={5} />
            <Small n="find" label="Find/ Replace" gap={5} />
          </SmallColumn>
        </GroupBody>
        <GroupLabel $pr={10}>Text<Launcher /></GroupLabel>
      </RibbonGroup>

      <RibbonGroup $w={242}>
        <GroupBody $pl={2}>
          <BigTool $w={49}>
            <IconSvg width="32" height="28" viewBox="0 0 32 28" fill="none" stroke="#444">
              <path d="M21 2l7 3 3 7-3 7-7 3-7-3-3-7 3-7z" fill="#fff" /><path d="M11 12H4v13" /><circle cx="4" cy="25" r="1.5" />
              <text x="21" y="18" fontSize="15" fontFamily="Liberation Sans" fill="#222" stroke="none" textAnchor="middle">1</text>
            </IconSvg>
            <BigLabel $mt={6}>Tag by</BigLabel>
            <BigLabel $mt={0}>Category</BigLabel>
          </BigTool>
          <BigTool $w={35}>
            <IconSvg width="32" height="28" viewBox="0 0 32 28" fill="none" stroke="#444">
              <path d="M18 0h8l-8 8z" stroke="#888" /><path d="M21 2l7 3 3 7-3 7-7 3-7-3-3-7 3-7z" fill="#fff" /><path d="M11 12H5v13M8 9H2v16" /><circle cx="5" cy="25" r="1.5" /><circle cx="2" cy="25" r="1.5" />
              <text x="21" y="18" fontSize="15" fontFamily="Liberation Sans" fill="#222" stroke="none" textAnchor="middle">1</text>
            </IconSvg>
            <BigLabel $mt={6}>Tag</BigLabel>
            <BigLabel $mt={0}>All</BigLabel>
          </BigTool>
          <IconGrid $cols={3} $w={72} $ml={4}>
            <Icon n="tagOn" /><Icon n="tagOff" /><Icon n="tagBox" />
            <Icon n="tagFold" /><Icon n="tagSave" /><Icon n="tagStep" />
            <Icon n="tagX" /><Icon n="tagGrid" /><Icon n="tagDiag" />
          </IconGrid>
          <SmallColumn $w={10}><SmallTool /><SmallTool /><SmallTool><Caret /></SmallTool></SmallColumn>
          <SoftSep />
          <BigTool $w={61}>
            <IconSvg width="30" height="30" viewBox="0 0 30 30" fill="none" stroke="#444">
              <rect x="14" y="2" width="12" height="12" fill="#fff" /><circle cx="23" cy="17" r="6" fill="#ddd" /><path d="M14 9H5v15M3 21l2 4 2-4" />
              <text x="20" y="12" fontSize="9" fontWeight="700" fontFamily="Liberation Sans" fill="#222" stroke="none" textAnchor="middle">1</text>
            </IconSvg>
            <BigLabel>Keynote</BigLabel>
            <Caret />
          </BigTool>
        </GroupBody>
        <GroupLabel>Tag <Caret /></GroupLabel>
      </RibbonGroup>

      <RibbonGroup $w={53}>
        <GroupBody>
          <IconGrid $cols={1} $w={53}>
            <Icon n="fillA" /><Icon n="fillB" /><Icon n="fillC" />
          </IconGrid>
        </GroupBody>
        <GroupLabel>Color Fill</GroupLabel>
      </RibbonGroup>

      <RibbonGroup $w={98} $last>
        <GroupBody $pl={2}>
          <BigTool $w={44}>
            <IconSvg width="30" height="30" viewBox="0 0 30 30" stroke="#333">
              <rect x="4" y="4" width="22" height="22" rx="2" fill="#eee" strokeWidth="1.5" />
              <path d="M15 4h9a2 2 0 0 1 2 2v9H15zM4 15h11v11H6a2 2 0 0 1-2-2z" fill="#333" />
              <path d="M15 0v30M0 15h30" />
            </IconSvg>
            <BigLabel>Symbol</BigLabel>
          </BigTool>
          <IconGrid $cols={2} $w={44} $ml={-1}>
            <Icon n="symA" /><Icon n="symB" />
            <Icon n="symC" /><Icon n="symD" />
            <Icon n="symE" /><Icon n="symF" />
          </IconGrid>
        </GroupBody>
        <GroupLabel>Symbol</GroupLabel>
      </RibbonGroup>
    </Ribbon>
    <RibbonGap />

    <Workspace>
      <PropertiesPanel>
        <PropertiesHeader>Properties<CloseX>×</CloseX></PropertiesHeader>
        <PropertiesBody>
          <TypeSelector>
            <TypeThumb>
              <IconSvg width="30" height="30" viewBox="0 0 30 30" fill="#f4f4f4" stroke="#555">
                <rect x="1" y="3" width="18" height="22" />
                <path d="M3 6v4M6 6v4M9 6v4M12 6v4M15 6v4M3 13h14M3 16h14M3 19h14M3 22h14" />
                <rect x="15" y="7" width="13" height="22" fill="#eee" />
                <path d="M18 10v16M21 10v16M24 10v16" />
              </IconSvg>
            </TypeThumb>
            <TypeName>Structural Plan</TypeName>
            <TypeCaret><Caret /></TypeCaret>
          </TypeSelector>
          <InstanceRow>
            <InstanceCombo>
              Structural Plan: TẦNG 2
              <ComboChevron $dir="down" />
            </InstanceCombo>
            <EditType>
              <IconSvg width="15" height="15" viewBox="0 0 15 15" fill="#fff" stroke="#555">
                <rect x="0.5" y="1.5" width="6" height="6" /><rect x="0.5" y="8.5" width="6" height="6" /><rect x="8.5" y="1.5" width="6" height="4" /><rect x="8.5" y="7.5" width="6" height="7" />
              </IconSvg>
              Edit Type
            </EditType>
          </InstanceRow>
          <PropertyArea>
            <PropertyGrid>
              <GridHeader>Graphics<Collapse /></GridHeader>
              {graphics.map((p) => <PropertyRow key={p.name} {...p} />)}
              <GridHeader>Underlay<Collapse /></GridHeader>
              {underlay.map((p) => <PropertyRow key={p.name} {...p} />)}
            </PropertyGrid>
            <VScroll $w={15}>
              <ScrollEnd><Chevron $dir="up" /></ScrollEnd>
              <Thumb $top={0} $h={152} />
              <ScrollEnd $bottom><Chevron $dir="down" /></ScrollEnd>
            </VScroll>
          </PropertyArea>
          <PanelFooter>
            <HelpLink>Properties help</HelpLink>
            <ApplyButton>Apply</ApplyButton>
          </PanelFooter>
        </PropertiesBody>
      </PropertiesPanel>

      <ViewColumn>
        <ViewRow>
          <Canvas>
            <Drawing />
            <ViewControls>
              <IconSvg width="12" height="12" viewBox="0 0 12 12" fill="#ddd" stroke="#777"><rect x="0.5" y="5.5" width="11" height="3" /></IconSvg>
              <IconSvg width="12" height="12" viewBox="0 0 12 12" fill="#eee" stroke="#666"><rect x="3.5" y="0.5" width="8" height="8" /><rect x="0.5" y="3.5" width="8" height="8" /></IconSvg>
              <IconSvg width="12" height="12" viewBox="0 0 12 12" fill="none" stroke="#555" strokeWidth="2"><path d="M2 2l8 8M10 2l-8 8" /></IconSvg>
            </ViewControls>
            <NavBar>
              <NavDot />
              <IconSvg width="24" height="26" viewBox="0 0 24 26" fill="none" stroke="#aaa" strokeWidth="2">
                <circle cx="10" cy="11" r="8" /><circle cx="10" cy="11" r="4" stroke="#888" strokeWidth="1" />
                <text x="18" y="23" fontSize="9" fontWeight="700" fontFamily="Liberation Sans" fill="#6d9bc9" stroke="none" textAnchor="middle">2D</text>
              </IconSvg>
              <Caret $c="#888" $mt={5} />
              <NavRule />
              <IconSvg width="18" height="18" viewBox="0 0 18 18" fill="none" stroke="#777">
                <rect x="1" y="1" width="11" height="11" fill="#a8cf8c" stroke="#9ab" /><circle cx="11" cy="11" r="3" fill="#fff" /><path d="M13 13l3 3" />
              </IconSvg>
              <Caret $c="#888" $mt={7} />
              <NavDot $end />
            </NavBar>
          </Canvas>
          <ViewScrollTrack $w={16}>
            <ScrollEnd><Chevron $dir="up" /></ScrollEnd>
            <Thumb $top={214} $h={17} />
            <ScrollEnd $bottom><Chevron $dir="down" /></ScrollEnd>
          </ViewScrollTrack>
        </ViewRow>
        <ViewBar>
          <ScaleText>1 : 65</ScaleText>
          <ViewBarIcons>
            <Icon n="crop" /><Icon n="box" /><Icon n="sun" /><Icon n="hideEl" /><Icon n="lamp" /><Icon n="lamp2" />
            <Icon n="glasses" /><Icon n="pin" /><Icon n="temp" /><Icon n="reveal" /><Icon n="crop2" />
          </ViewBarIcons>
          <Chevron $dir="left" />
          <HThumb $ml={256} $w={15} />
          <Spacer />
          <Chevron $dir="right" />
          <Grip />
        </ViewBar>
      </ViewColumn>

      <BrowserPanel>
        <PanelHeader>Project Browser - KHOA HOC...<CloseX>×</CloseX></PanelHeader>
        <Tree>
          <Branch $ml={0}>
            <TreeRow><Expander $open /><Dash $w={6} /><Icon n="views" s={14} /><NodeLabel $ml={4}>Views (all)</NodeLabel></TreeRow>
            <Branch $ml={18}>
              <TreeRow><Expander $open /><Dash $w={10} /><NodeLabel>Structural Plans</NodeLabel></TreeRow>
              <Branch $ml={19}>
                {plans.map((t) => (
                  <TreeRow key={t}><Dash $w={15} /><NodeLabel $active={t === 'TẦNG 2'}>{t}</NodeLabel></TreeRow>
                ))}
              </Branch>
              <TreeRow><Expander $open /><Dash $w={10} /><NodeLabel>3D Views</NodeLabel></TreeRow>
              <Branch $ml={19}>
                <TreeRow><Dash $w={15} /><NodeLabel>{'{3D}'}</NodeLabel></TreeRow>
              </Branch>
              <TreeRow><Expander $open /><Dash $w={10} /><NodeLabel>Elevations (Building Elevation)</NodeLabel></TreeRow>
            </Branch>
            <Branch $ml={37}>
              {elevations.map((t) => (
                <TreeRow key={t}><Dash $w={15} /><NodeLabel>{t}</NodeLabel></TreeRow>
              ))}
            </Branch>
            <TreeRow><Dash $w={11} /><Icon n="legends" s={14} /><NodeLabel $ml={4}>Legends</NodeLabel></TreeRow>
            <TreeRow><Dash $w={11} /><Icon n="sched" s={14} /><NodeLabel $ml={4}>Schedules/Quantities</NodeLabel></TreeRow>
            <TreeRow><Expander $open /><Dash $w={6} /><Icon n="sheets" s={14} /><NodeLabel $ml={4}>Sheets (all)</NodeLabel></TreeRow>
            <Branch $ml={19}>
              <TreeRow><Expander /><Dash $w={10} /><NodeLabel>S.1 - Unnamed</NodeLabel></TreeRow>
            </Branch>
            <TreeRow><Expander /><Dash $w={6} /><Icon n="families" s={14} /><NodeLabel $ml={4}>Families</NodeLabel></TreeRow>
            <TreeRow><Expander /><Dash $w={6} /><Icon n="groups" s={14} /><NodeLabel $ml={4}>Groups</NodeLabel></TreeRow>
            <TreeRow><Dash $w={11} /><Icon n="links" s={14} /><NodeLabel $ml={4}>Revit Links</NodeLabel></TreeRow>
          </Branch>
        </Tree>
        <BrowserBar>
          <Chevron $dir="left" />
          <HThumb $ml={8} $w={116} />
          <Spacer />
          <Chevron $dir="right" />
          <SecondChevron $dir="right" />
        </BrowserBar>
      </BrowserPanel>
    </Workspace>

    <StatusBar>
      <StatusText>Click to select, TAB for alternates, CTRL adds, SHIFT unselects.</StatusText>
      <Slot $w={24}><Icon n="wrench" /></Slot>
      <StatusCombo $w={194}><span /><ComboChevron $dir="down" $c="#999" /></StatusCombo>
      <Slot $w={24}><Icon n="pipe" /></Slot>
      <StatusCount $w={20}>:0</StatusCount>
      <Slot $w={34}><Icon n="calc" /></Slot>
      <Slot $w={15}><Icon n="exit" /></Slot>
      <StatusCombo $w={194} $ml={7}>Main Model<ComboChevron $dir="down" $c="#999" /></StatusCombo>
      <Slot $w={24} $ml={208}><Icon n="selLink" /></Slot>
      <Slot $w={24}><Icon n="selUnd" /></Slot>
      <Slot $w={24}><Icon n="selPin" /></Slot>
      <Slot $w={24}><Icon n="selFace" /></Slot>
      <Slot $w={24}><Icon n="selDrag" /></Slot>
      <Slot $w={24}><Icon n="gear" /></Slot>
      <Slot $w={24}><Icon n="funnel" /></Slot>
      <StatusCount $w={20} $ml={-3}>:0</StatusCount>
    </StatusBar>

    <Taskbar>
      <StartButton>
        <IconSvg width="15" height="15" viewBox="0 0 15 15" fill="#fff">
          <path d="M0 2l6-.9V7H0zM7 1l8-1v7H7zM0 8h6v5.900L0 13zM7 8h8v7l-8-1z" />
        </IconSvg>
      </StartButton>
      <SearchWeb>Search the web and Windows</SearchWeb>
      <TaskSlot>
        <IconSvg width="16" height="14" viewBox="0 0 16 14" fill="none" stroke="#fff">
          <rect x="3.5" y="0.5" width="9" height="13" /><path d="M1 2v10M15 2v10" />
        </IconSvg>
      </TaskSlot>
      <TaskSlot>
        <IconSvg width="24" height="26" viewBox="0 0 24 26">
          <circle cx="12" cy="15" r="10" fill="#4fa95c" /><circle cx="12" cy="15" r="4" fill="#fff" />
          <path d="M12 15l9-7-3 9z" fill="#e6d34a" /><path d="M2 7c2-5 8-7 12-4l-8 7z" fill="#c8322b" /><circle cx="3" cy="8" r="2" fill="#fff" />
        </IconSvg>
      </TaskSlot>
      <TaskSlot $running>
        <IconSvg width="22" height="20" viewBox="0 0 22 20">
          <path d="M0 2h8l2 2h12v14H0z" fill="#f3d67a" /><rect x="6" y="11" width="10" height="9" fill="#2a8fd0" /><rect x="9" y="15" width="4" height="5" fill="#f3d67a" />
        </IconSvg>
      </TaskSlot>
      <TaskSlot $running><AppTile $bg="#f2f2f2" $fg="#c0272d">A</AppTile></TaskSlot>
      <TaskSlot $running><AppTile $bg="#57b52c" $fg="#fff" $size={22}>C</AppTile></TaskSlot>
      <TaskSlot $running><AppTile $bg="#22569e" $fg="#fff" $size={12}>W≡</AppTile></TaskSlot>
      <TaskSlot $active $running><AppTile $bg="#e8eef4" $fg="#2f6ea8">R</AppTile></TaskSlot>
      <TaskSlot $running><AppTile $bg="#ef5a44" $fg="#fff" $size={22}>C</AppTile></TaskSlot>
      <Tray>
        <Slot $w={24}><TrayChevron $dir="up" /></Slot>
        <Slot $w={24}>
          <IconSvg width="16" height="12" viewBox="0 0 16 12" fill="none" stroke="#ddd">
            <rect x="5" y="3" width="10" height="7" fill="#555" /><path d="M0 5h4M2 3v4" strokeWidth="1.5" />
          </IconSvg>
        </Slot>
        <Slot $w={22}>
          <IconSvg width="16" height="14" viewBox="0 0 16 14" fill="none" stroke="#888">
            <path d="M4 13c0-4 3-7 8-7M7 13c0-3 2-4 5-4M10 13c0-1 1-2 2-2" /><circle cx="2" cy="2" r="1.5" fill="#ddd" stroke="none" />
          </IconSvg>
        </Slot>
        <Slot $w={24}>
          <IconSvg width="16" height="14" viewBox="0 0 16 14" fill="none" stroke="#ddd">
            <path d="M1 5h2l4-3v10L3 9H1zM10 5l4 4M14 5l-4 4" />
          </IconSvg>
        </Slot>
        <Slot $w={24}>
          <IconSvg width="16" height="16" viewBox="0 0 16 16" fill="#eee">
            <path d="M0 0h16v12H9l-1 3-1-3H0z" /><path d="M3 3h10M3 6h10M3 9h6" stroke="#333" />
          </IconSvg>
        </Slot>
        <Clock>8:39 AM<br />1/4/2019</Clock>
      </Tray>
    </Taskbar>
  </Screen>
);

export default App;
